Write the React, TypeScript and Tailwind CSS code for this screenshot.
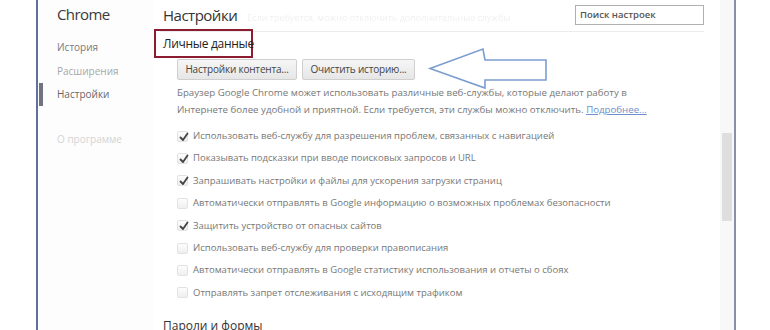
import React from "react";

const font = { fontFamily: '"Open Sans", "Noto Sans", sans-serif' };

function Check({ checked }: { checked: boolean }) {
  return (
    <span className="relative flex h-[11px] w-[11px] shrink-0 items-center justify-center rounded-[2px] border border-[#e2e2e2] bg-gradient-to-b from-[#fdfdfd] to-[#efefef]">
      {checked && (
        <svg width="10" height="10" viewBox="0 0 10 10" className="absolute left-[1px] top-[0px]">
          <path d="M1.5 5.5 L4 8 L8.5 1.5" fill="none" stroke="#444" strokeWidth="1.8" strokeLinecap="round" strokeLinejoin="round" />
        </svg>
      )}
    </span>
  );
}

const rows: [boolean, string][] = [
  [true, "Использовать веб-службу для разрешения проблем, связанных с навигацией"],
  [true, "Показывать подсказки при вводе поисковых запросов и URL"],
  [true, "Запрашивать настройки и файлы для ускорения загрузки страниц"],
  [false, "Автоматически отправлять в Google информацию о возможных проблемах безопасности"],
  [true, "Защитить устройство от опасных сайтов"],
  [false, "Использовать веб-службу для проверки правописания"],
  [false, "Автоматически отправлять в Google статистику использования и отчеты о сбоях"],
  [false, "Отправлять запрет отслеживания с исходящим трафиком"],
];

export default function App() {
  return (
    <div className="relative flex h-[330px] w-[770px] overflow-hidden bg-white" style={font}>
      <div className="w-[36px] shrink-0" />
      {/* sidebar */}
      <div className="flex w-[117px] shrink-0 flex-col border-l-2 border-[#5f719c] bg-[#fdfdfd]">
        <div className="shrink-0 pl-[19px] pt-[2px] text-[15px] leading-[24px] tracking-[-0.6px] text-[#3a3a3a]">Chrome</div>
        <div className="mt-[10px] flex h-[23px] shrink-0 items-center">
          <span className="ml-px h-full w-[4px]" />
          <span className="pl-[14px] text-[10px] text-[#7a7a7a]">История</span>
        </div>
        <div className="mt-px flex h-[23px] shrink-0 items-center">
          <span className="ml-px h-full w-[4px]" />
          <span className="pl-[14px] text-[10px] text-[#a8a8a8]">Расширения</span>
        </div>
        <div className="flex h-[23px] shrink-0 items-center">
          <span className="ml-px h-full w-[4px] bg-[#6f7480]" />
          <span className="pl-[14px] text-[10px] text-[#666]">Настройки</span>
        </div>
        <div className="mt-[22px] flex h-[23px] shrink-0 items-center">
          <span className="ml-px h-full w-[4px]" />
          <span className="pl-[14px] text-[10px] text-[#d4d4d4]">О программе</span>
        </div>
      </div>
      {/* main */}
      <div className="w-[567px] shrink-0">
        <div className="ml-[7px] mr-[16px] flex h-[32px] items-center border-b border-[#ececec]">
          <span className="pl-[3px] text-[15px] tracking-[-0.5px] text-[#333]">Настройки</span>
          <span className="ml-[10px] mt-[4px] text-[9px] text-[#f0f0f0] blur-[0.6px]">Если требуется, можно отключить дополнительные службы</span>
          <div className="ml-auto mt-[-1px] flex h-[20px] w-[129px] items-center border border-[#b0b0b0] px-[4px] text-[9.5px] font-semibold text-[#555]">
            Поиск настроек
          </div>
        </div>
        <div className="ml-[1px] mt-[-3px] flex h-[29px] w-[99px] items-center whitespace-nowrap border-2 border-[#8c1c30] pl-[7px] text-[12px] tracking-[-0.3px] text-[#222]">
          Личные данные
        </div>
        <div className="ml-[24px] mt-px flex gap-[5px]">
          <div className="flex h-[21px] w-[120px] items-center justify-center rounded-[2px] border border-[#cfcfcf] bg-gradient-to-b from-[#f6f6f6] to-[#e6e6e6] text-[10px] tracking-[-0.2px] text-[#444]">
            Настройки контента...
          </div>
          <div className="flex h-[21px] w-[113px] items-center justify-center rounded-[2px] border border-[#cfcfcf] bg-gradient-to-b from-[#f6f6f6] to-[#e6e6e6] text-[10px] tracking-[-0.2px] text-[#444]">
            Очистить историю...
          </div>
        </div>
        <div className="ml-[24px] mt-[4px] w-[480px] text-[9.7px] leading-[17px] text-[#777]">
          Браузер Google Chrome может использовать различные веб-службы, которые делают работу в Интернете более удобной и приятной. Если требуется, эти службы можно отключить.{" "}
          <span className="text-[#6d8fcb] underline">Подробнее...</span>
        </div>
        <div className="ml-[24px] mt-[7px] flex flex-col">
          {rows.map(([c, t], i) => (
            <div key={i} className="flex h-[22.4px] shrink-0 items-center gap-[5px] text-[9.5px] text-[#777]">
              <Check checked={c} />
              <span>{t}</span>
            </div>
          ))}
        </div>
        <div className="ml-[10px] mt-[14px] text-[12px] leading-[16px] text-[#333]">Пароли и формы</div>
      </div>
      {/* scrollbar */}
      <div className="flex w-[14px] shrink-0 flex-col bg-[#f8f8f8] pt-[133px]">
        <div className="mx-[2px] h-[88px] shrink-0 bg-[#dedede]" />
      </div>
      <div className="w-[2px] shrink-0 bg-[#8790a6]" />
      <div className="flex-1 bg-white" />
      {/* arrow overlay */}
      <svg className="absolute left-0 top-0" width="770" height="330" viewBox="0 0 770 330">
        <path
          d="M430 68.5 L483 49 L485 60 L546 60 L546 80 L485 80 L485 88 Z"
          fill="none"
          stroke="#7c9dcf"
          strokeWidth="1.6"
          strokeLinejoin="miter"
        />
      </svg>
    </div>
  );
}
